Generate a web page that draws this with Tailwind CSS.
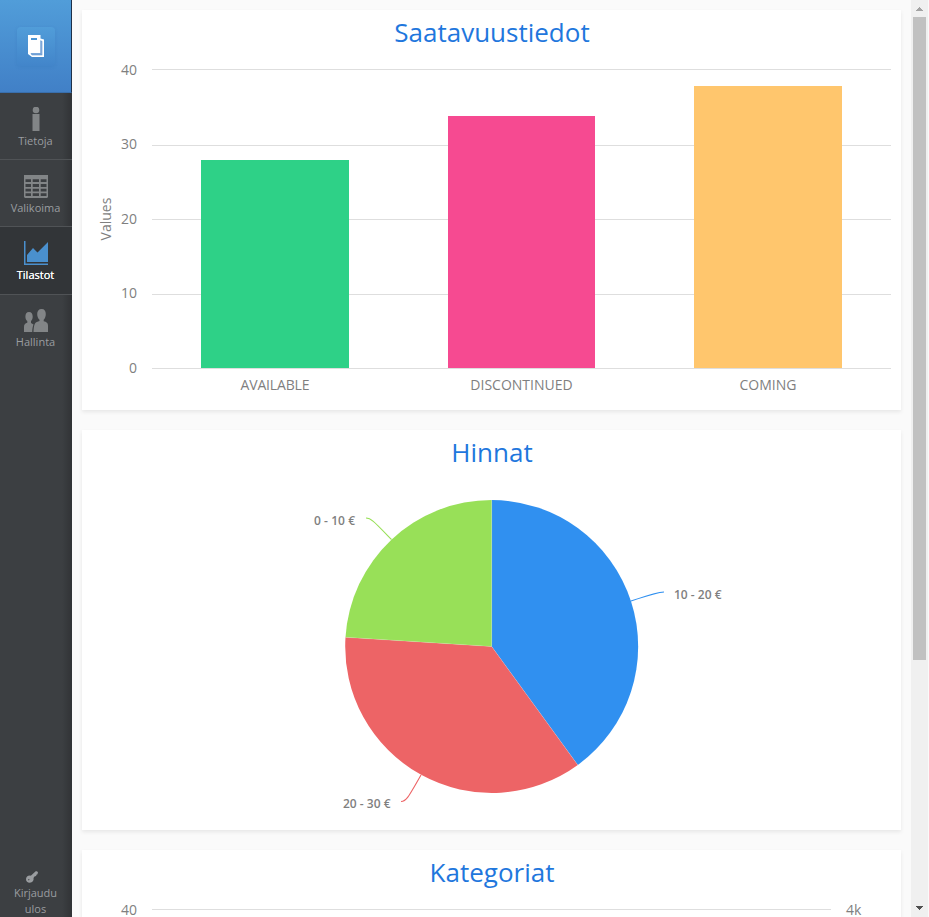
<!DOCTYPE html>
<html lang="fi">
<head>
<meta charset="utf-8">
<title>Tilastot</title>
<script src="https://cdn.jsdelivr.net/npm/@tailwindcss/browser@4"></script>
</head>
<body class="flex h-[917px] w-[929px] overflow-hidden bg-[#fafafa] font-['Open_Sans','Noto_Sans',sans-serif]">

<nav class="flex h-full w-[72px] shrink-0 flex-col bg-[linear-gradient(to_right,transparent_62px,#00000030_72px)] bg-[#3c3f42] text-center text-[11px] leading-4 text-[#9a9da0]">
  <div class="flex h-[93px] items-center justify-center border-r border-b border-r-[#1d3049] border-b-[#396fad] bg-linear-to-b from-[#519dd9] to-[#4180c7]">
    <div class="flex h-[39px] w-[38px] items-center justify-center rounded-[4px] bg-linear-to-b from-[#519dd9] to-[#4285ca] shadow-[0_1px_3px_#2f6fb240]">
      <svg class="h-[22px] w-4" viewBox="0 0 16 22"><path fill="#fff" fill-rule="evenodd" d="M0 0H12.500V3.500L16 4.500V22H4L0 19ZM3 3V5H9V3ZM2.500 18.300L4 20.200H14.300V6.200L12.500 5.200V18.300Z"/><path fill="#7fa5d8" d="M12.600 5.500L14 6.500V19.800H4L3 18.600H12.600Z"/></svg>
    </div>
  </div>
  <a class="flex h-[67px] flex-col items-center border-b border-[#505356] pr-px pt-[14px]">
    <svg class="h-6 w-2" viewBox="0 0 8 24" fill="#828587"><circle cx="4" cy="3" r="3.3"/><path d="M.5 7H7.5V24H.5Z"/></svg>
    <span class="mt-[2px]">Tietoja</span>
  </a>
  <a class="flex h-[67px] flex-col items-center border-b border-[#505356] pt-[15px]">
    <svg class="h-[23px] w-6" viewBox="0 0 24 23"><path fill="#828587" fill-rule="evenodd" d="M0 0H24V22L23 23H1L0 22ZM1.500 4.300V7H7V4.300ZM8.700 4.300V7H15V4.300ZM16.700 4.300V7H22.500V4.300ZM1.500 9V12H7V9ZM8.700 9V12H15V9ZM16.700 9V12H22.500V9ZM1.500 13.800V16.500H7V13.800ZM8.700 13.800V16.500H15V13.800ZM16.700 13.800V16.500H22.500V13.800ZM1.500 18.300V21H7V18.300ZM8.700 18.300V21H15V18.300ZM16.700 18.300V21H22.500V18.300Z"/></svg>
    <span class="mt-[2px] mr-px">Valikoima</span>
  </a>
  <a class="flex h-[68px] flex-col items-center border-b border-[#505356] bg-[#323538] pt-[14px] text-white">
    <svg class="h-6 w-6" viewBox="0 0 24 24" fill="#4a90ce"><path d="M0 0H1.500V22.500H24V24H0ZM3 14L9 7L13.500 11.500L24 1V21H3Z"/></svg>
    <span class="mt-[2px] mr-px [text-shadow:0_0_.5px_#fff]">Tilastot</span>
  </a>
  <a class="flex h-[67px] flex-col items-center pt-[14px]">
    <svg class="h-[23px] w-6" viewBox="0 0 24 23" fill="#828587"><path d="M5 3C7.500 3 8.700 5 8.700 7.500C8.700 9.500 8 11 7 12V14L9.500 15.500C8.800 17 8.300 20 8.200 23H0V18C0 15.500 1 14.500 3.300 13.800V12C2 11 1.400 9.500 1.400 7.500C1.400 5 2.500 3 5 3ZM17.600 0C20.500 0 21.800 2 21.800 5C21.800 7.500 21 9.500 19.700 10.700V12.300C22.500 13 24 14 24 16.500V23H9.500C9.500 19.500 10 16 11 14.500C12 13 13.500 12.700 15.500 12V10.700C14 9.500 13.200 7.500 13.200 5C13.200 2 14.700 0 17.600 0Z"/></svg>
    <span class="mt-[2px] mr-px">Hallinta</span>
  </a>
  <a class="mt-auto flex flex-col items-center pr-px">
    <svg class="mr-[7px] h-3 w-3" viewBox="0 0 12 12"><path fill="#9a9da0" fill-rule="evenodd" d="M10 0L12 1L11.500 3.200L10.700 3.600L10 5L8.500 5.600L7.500 7C8 9.500 6.500 11.700 3.800 11.700C1.500 11.700 0 10.200 0 8.200C0 6 2 4.200 4.800 4.700ZM2 8.800L2.800 9.600L3.600 8.800L2.800 8Z"/></svg>
    <span class="mt-[2px] w-[52px]">Kirjaudu ulos</span>
  </a>
</nav>

<main class="flex min-w-0 flex-1 flex-col gap-5 overflow-hidden px-[10px] pt-[10px]">
  <section class="h-[400px] shrink-0 bg-white shadow-[0_2px_4px_#00000014]">
    <svg class="block h-[400px] w-[819px]" viewBox="0 0 819 400" font-size="14" fill="#7f7f7f">
      <text x="410" y="32" text-anchor="middle" font-size="26" fill="#1f77dd">Saatavuustiedot</text>
      <path stroke="#dedede" fill="none" d="M70 59.500H809M70 135.500H809M70 209.500H809M70 284.500H809M70 358.500H809"/>
      <path fill="#2ed187" d="M119 150H267V358H119Z"/>
      <path fill="#f64a91" d="M366 106H513V358H366Z"/>
      <path fill="#ffc66d" d="M612 76H760V358H612Z"/>
      <g text-anchor="end">
        <text x="55" y="65">40</text><text x="55" y="139">30</text><text x="55" y="214">20</text><text x="55" y="288">10</text><text x="55" y="363">0</text>
      </g>
      <text transform="translate(29 209) rotate(-90)" text-anchor="middle">Values</text>
      <g text-anchor="middle">
        <text x="193" y="380" textLength="69">AVAILABLE</text><text x="439.500" y="380">DISCONTINUED</text><text x="686" y="380">COMING</text>
      </g>
    </svg>
  </section>

  <section class="h-[400px] shrink-0 bg-white shadow-[0_2px_4px_#00000014]">
    <svg class="block h-[400px] w-[819px]" viewBox="0 0 819 400" fill="#7f7f7f">
      <text x="410" y="32" text-anchor="middle" font-size="26" fill="#1f77dd">Hinnat</text>
      <path fill="#3090f0" d="M409.700 216.500V70A146.500 146.500 0 0 1 495.800 335Z"/>
      <path fill="#ed6466" d="M409.700 216.500L495.800 335A146.500 146.500 0 0 1 263.500 207.300Z"/>
      <path fill="#98e058" d="M409.700 216.500L263.500 207.300A146.500 146.500 0 0 1 409.700 70Z"/>
      <path fill="none" stroke="#fff" stroke-opacity=".25" stroke-width=".6" d="M409.700 70V216.500L495.800 335M409.700 216.500L263.500 207.300"/>
      <g fill="none" stroke-width="1.100">
        <path stroke="#98e058" d="M284 88C289 88 292 91.500 309.500 109.500"/>
        <path stroke="#3090f0" d="M582 162C577 162 572 163.500 549 171"/>
        <path stroke="#ed6466" d="M319 371.500C324 371.500 326 368 339 345"/>
      </g>
      <g font-size="12" font-weight="600">
        <text x="232" y="95" textLength="41">0 - 10 €</text>
        <text x="592" y="169" textLength="47.500">10 - 20 €</text>
        <text x="261" y="378" textLength="47.500">20 - 30 €</text>
      </g>
    </svg>
  </section>

  <section class="h-[400px] shrink-0 bg-white shadow-[0_2px_4px_#00000014]">
    <svg class="block h-[400px] w-[819px]" viewBox="0 0 819 400" font-size="14" fill="#7f7f7f">
      <text x="410" y="32" text-anchor="middle" font-size="26" fill="#1f77dd">Kategoriat</text>
      <path stroke="#dedede" d="M70 59.500H749"/>
      <text x="55" y="65" text-anchor="end">40</text>
      <text x="764" y="65">4k</text>
    </svg>
  </section>
</main>

<div class="mr-px flex h-full w-[17px] shrink-0 flex-col items-center bg-[#f0f0f0]">
  <svg class="h-[17px] w-[17px] shrink-0" viewBox="0 0 17 17" shape-rendering="crispEdges"><path fill="#a3a3a3" d="M8 7H9V8H10V9H11V10H12V11H5V10H6V9H7V8H8Z"/></svg>
  <div class="h-[643px] w-[13px] bg-[#c1c1c1]"></div>
  <svg class="mt-auto h-[17px] w-[17px] shrink-0" viewBox="0 0 17 17" shape-rendering="crispEdges"><path fill="#505050" d="M5 6H12V7H11V8H10V9H9V10H8V9H7V8H6V7H5Z"/></svg>
</div>
</body>
</html>
